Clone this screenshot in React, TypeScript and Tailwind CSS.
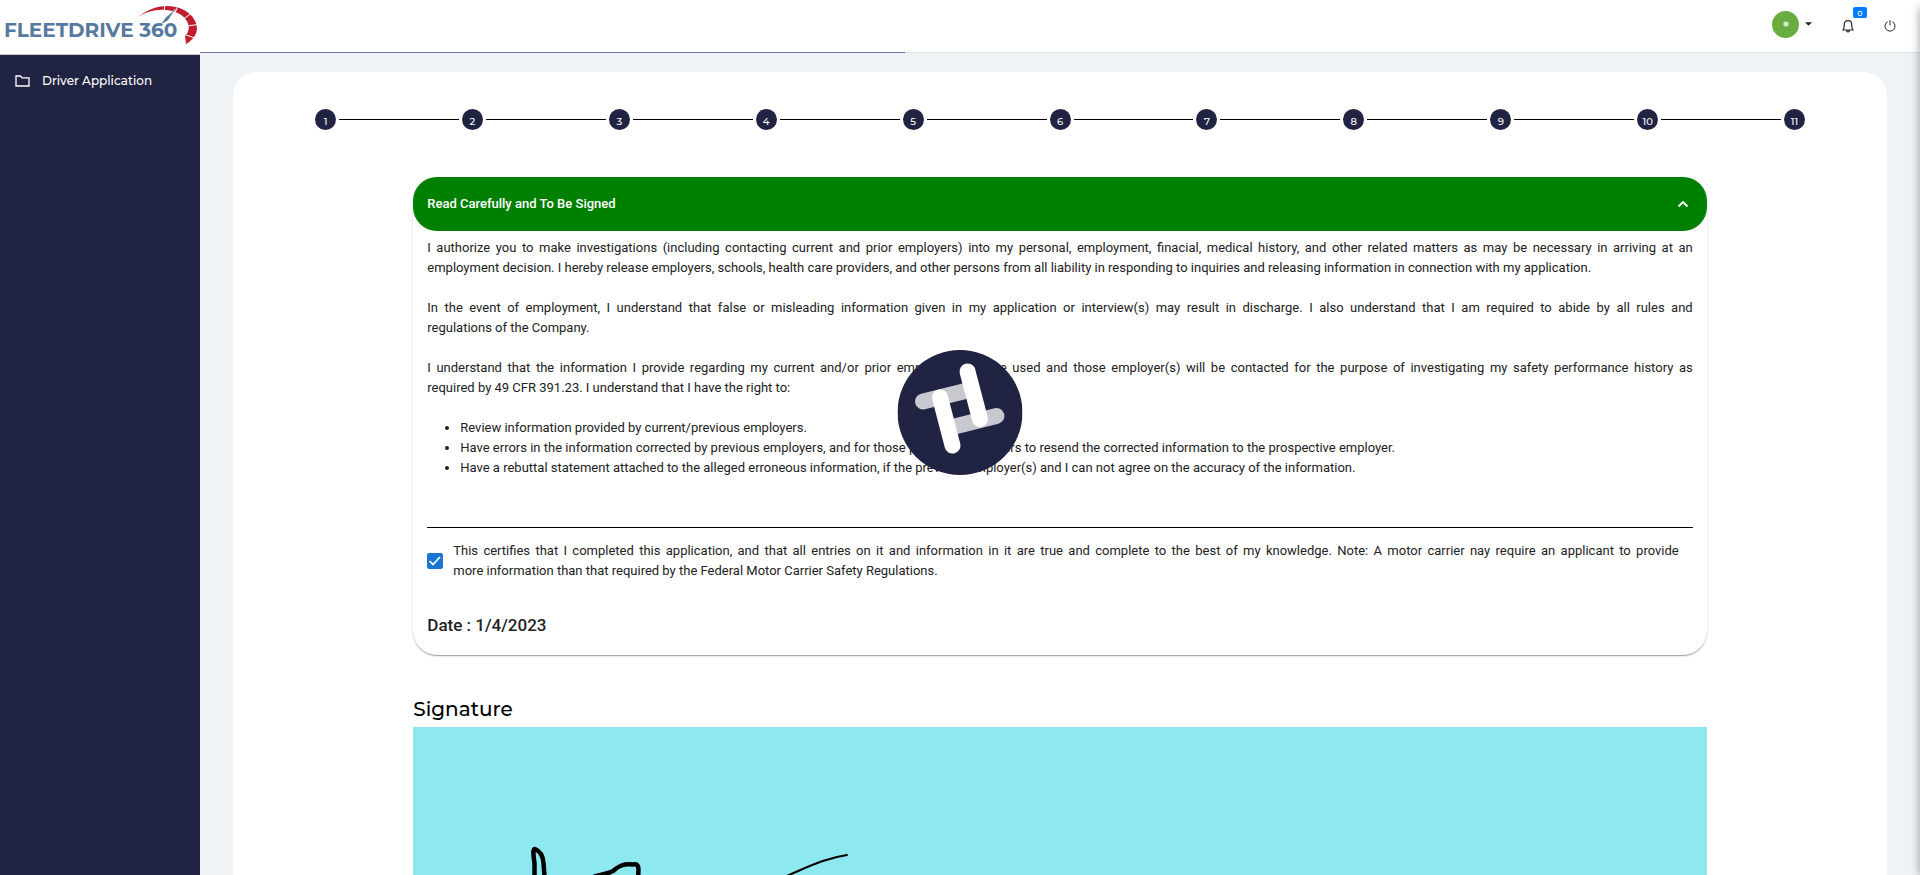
import { useState } from "react";

const steps = [1, 2, 3, 4, 5, 6, 7, 8, 9, 10, 11];

const rights = [
  "Review information provided by current/previous employers.",
  "Have errors in the information corrected by previous employers, and for those previous employers to resend the corrected information to the prospective employer.",
  "Have a rebuttal statement attached to the alleged erroneous information, if the previous employer(s) and I can not agree on the accuracy of the information.",
];

function Logo() {
  return (
    <a href="#" aria-label="FleetDrive 360" className="block h-[54px] w-full bg-white">
      <svg viewBox="0 0 200 54" className="block h-[54px] w-[200px]">
        <text x="4" y="37" fontFamily="Montserrat, DejaVu Sans, sans-serif" fontSize="20" fontWeight="700" fill="#56799f">
          FLEETDRIVE 360
        </text>
        <path
          d="M138 17 C148 9 158 6 168 6 C185 6.500 197 17 197 29 C196.500 35 193 40 186 44 L185 36 C188.500 33 189.500 28 188 23.500 C185 15 176 11 166 10 C155 9 146 12 138 17 Z"
          fill="#c01e2e"
        />
        <path
          d="M164 11 L165 5 M174 15 L178 6 M184 18.500 L192 13 M187 26 L198 24.500 M186 35 L195 38"
          stroke="#fff"
        />
        <path
          d="M175.500 9 L168 20.500 L163 23.500 L162 22.500 L165.500 17.500 Z"
          fill="#56799f"
          stroke="#fff"
          strokeWidth="0.500"
        />
      </svg>
    </a>
  );
}

function Sidebar() {
  return (
    <aside className="flex w-[200px] shrink-0 flex-col bg-[#212343]">
      <div className="border-b border-[#c8c8cc] bg-white">
        <Logo />
      </div>
      <nav className="pt-2">
        <a href="#" className="flex h-9 items-center gap-3 pl-[15px] text-xs font-medium text-white">
          <svg viewBox="0 0 15 12" className="h-3 w-[15px]" fill="none" stroke="currentColor" strokeWidth="1.300">
            <path d="M1 1 H5.500 L7 2.800 H14 V11 H1 Z" />
          </svg>
          Driver Application
        </a>
      </nav>
    </aside>
  );
}

function Header() {
  return (
    <header className="relative flex h-[53px] shrink-0 items-center justify-end border-b border-[#dbe2ec] bg-white pr-[24px]">
      <div className="absolute -bottom-px left-0 h-px w-[41%] bg-[#6f6fa5]" />
      <button type="button" aria-label="Account" className="mb-1 flex items-center gap-[6px]">
        <span className="flex size-[27px] items-center justify-center rounded-full bg-[#68ae3f]">
          <svg viewBox="0 0 8 8" className="size-2" stroke="#fff">
            <path d="M4 1 V7 M1 4 H7 M1.900 1.900 L6.100 6.100 M6.100 1.900 L1.900 6.100" />
          </svg>
        </span>
        <svg viewBox="0 0 7 4" className="h-1 w-[7px]">
          <path d="M0 0.300 H7 L3.500 3.800 Z" fill="#212529" />
        </svg>
      </button>
      <button type="button" aria-label="Notifications" className="relative ml-[30px] flex">
        <svg viewBox="0 0 12 14" className="h-[14px] w-3" fill="none" stroke="#222" strokeWidth="1.200">
          <path d="M1 11 C2.200 9.500 2.300 8.500 2.300 5.500 C2.300 3 3.800 1.600 6 1.600 C8.200 1.600 9.700 3 9.700 5.500 C9.700 8.500 9.800 9.500 11 11 Z M4.500 11.500 C4.700 13.300 7.300 13.300 7.500 11.500" />
        </svg>
        <span className="absolute -top-[12px] left-[11px] flex h-[11px] w-[14px] items-center justify-center rounded-[2px] bg-[#007bff] text-[8px] font-medium leading-none text-white">
          0
        </span>
      </button>
      <button type="button" aria-label="Log out" className="ml-[30px] flex">
        <svg viewBox="0 0 12 12" className="size-3" fill="none" stroke="#212343">
          <path d="M6 0 V5.500 M3.600 1.700 A5 5 0 1 0 8.400 1.700" />
        </svg>
      </button>
    </header>
  );
}

function Stepper() {
  return (
    <ol className="flex items-center px-[82px]">
      {steps.map((step) => (
        <li key={step} className={step === 1 ? "flex items-center" : "flex flex-1 items-center"}>
          {step > 1 && <span className="mx-[3px] h-px flex-1 bg-black" />}
          <span className="flex size-[21px] items-center justify-center rounded-full bg-[#212343] pt-1 text-[10px] font-medium leading-none text-white">
            {step}
          </span>
        </li>
      ))}
    </ol>
  );
}

function Agreement() {
  const [open, setOpen] = useState(true);
  const [certified, setCertified] = useState(true);
  return (
    <section className="rounded-3xl bg-white font-[Roboto,sans-serif] text-[13px] leading-5 text-[#222] shadow-[0_2px_1px_-1px_rgba(0,0,0,0.2),0_1px_1px_0_rgba(0,0,0,0.14),0_1px_3px_0_rgba(0,0,0,0.12)]">
      <h2>
        <button
          type="button"
          aria-expanded={open}
          onClick={() => setOpen(!open)}
          className="flex h-[54px] w-full items-center justify-between rounded-3xl bg-[#008000] pr-[18px] pl-[14px] font-medium text-white"
        >
          Read Carefully and To Be Signed
          <svg viewBox="0 0 12 8" className="h-2 w-3" fill="none" stroke="currentColor" strokeWidth="1.800">
            <path d="M1.500 6.500 L6 2 L10.500 6.500" />
          </svg>
        </button>
      </h2>
      {open && (
        <div className="px-[14px] pt-[7px] pb-[18px]">
          <div className="flex flex-col gap-5 text-justify">
            <p>
              I authorize you to make investigations (including contacting current and prior employers) into my
              personal, employment, finacial, medical history, and other related matters as may be necessary in
              arriving at an employment decision. I hereby release employers, schools, health care providers, and
              other persons from all liability in responding to inquiries and releasing information in connection with
              my application.
            </p>
            <p>
              In the event of employment, I understand that false or misleading information given in my application or
              interview(s) may result in discharge. I also understand that I am required to abide by all rules and
              regulations&nbsp;of&nbsp;the&nbsp;Company.
            </p>
            <p>
              I understand that the information I provide regarding my current and/or prior employers may be used and
              those employer(s) will be contacted for the purpose of investigating my safety performance history as
              required&nbsp;by&nbsp;49&nbsp;CFR&nbsp;391.23. I understand that I have the right to:
            </p>
            <ul className="list-disc pl-[33px]">
              {rights.map((right) => (
                <li key={right}>{right}</li>
              ))}
            </ul>
          </div>
          <hr className="mt-[49px] mb-[13px] border-black" />
          <label className="flex items-center gap-[10px] pr-[14px] text-justify">
            <span className="relative flex size-4 shrink-0">
              <input
                type="checkbox"
                checked={certified}
                onChange={(event) => setCertified(event.target.checked)}
                className="size-4 appearance-none rounded-[2px] border border-[#1976d2] checked:bg-[#1976d2]"
              />
              {certified && (
                <svg viewBox="0 0 16 16" className="pointer-events-none absolute inset-0" fill="none" stroke="#fff" strokeWidth="1.700">
                  <path d="M2.500 8 L6 11.500 L13 4" />
                </svg>
              )}
            </span>
            <span>
              This certifies that I completed this application, and that all entries on it and information in it are
              true and complete to the best of my knowledge. Note: A motor carrier nay require an applicant to provide
              more&nbsp;information than that required by the Federal Motor Carrier Safety Regulations.
            </span>
          </label>
          <p className="mt-8 text-[17px] leading-6 font-medium">Date : 1/4/2023</p>
        </div>
      )}
    </section>
  );
}

function Signature() {
  return (
    <section className="mt-[38px]">
      <h2 className="pb-[2px] text-xl leading-8 font-medium text-black">Signature</h2>
      <div className="h-[300px] bg-[#8de8f0]">
        <svg viewBox="0 0 500 300" className="h-[300px] w-[500px]" fill="none" stroke="#000" strokeLinecap="round" strokeLinejoin="round">
          <path d="M121.500 170 L121.500 136 C120 126 120 122 122 122 C127 124 130 129 130.500 136 L133.500 175" strokeWidth="4.500" />
          <path d="M172 153 C183 148 192 148 200 144 C206 139 210 136.500 220 137.500 C226 136 226 141 225 150 L223 170" strokeWidth="4.500" />
          <path d="M354 157 L376 148 C397 139 413 131 434 128" strokeWidth="2" />
        </svg>
      </div>
    </section>
  );
}

function Loader() {
  return (
    <div role="status" aria-label="Loading" className="absolute top-[350px] left-1/2 -translate-x-1/2">
      <svg viewBox="0 0 125 125" className="size-[125px]" strokeLinecap="round" strokeWidth="16">
        <circle cx="62.500" cy="62.500" r="62.500" fill="#212343" />
        <path d="M25.500 51.500 L70 40.500 M55 77 L99 66" stroke="#c8c8d0" />
        <path d="M42.500 47.500 L55 95.500 M70 21.500 L82.500 69" stroke="#fff" />
      </svg>
    </div>
  );
}

export default function App() {
  return (
    <div className="relative flex h-screen overflow-hidden bg-[#eff3f6] font-[Montserrat,Inter,sans-serif]">
      <Sidebar />
      <div className="flex min-w-0 flex-1 flex-col">
        <Header />
        <main className="flex-1 overflow-y-auto px-[33px] pt-[19px] [scrollbar-width:none]">
          <div className="rounded-3xl bg-white pt-[37px] pb-10">
            <Stepper />
            <div className="mx-auto mt-[47px] w-[78.200%] min-w-[600px]">
              <Agreement />
              <Signature />
            </div>
          </div>
        </main>
      </div>
      <Loader />
      <div className="absolute top-2 -right-2 bottom-0 w-2 shadow-[0_0_10px_rgba(0,0,0,0.4)]" />
    </div>
  );
}
